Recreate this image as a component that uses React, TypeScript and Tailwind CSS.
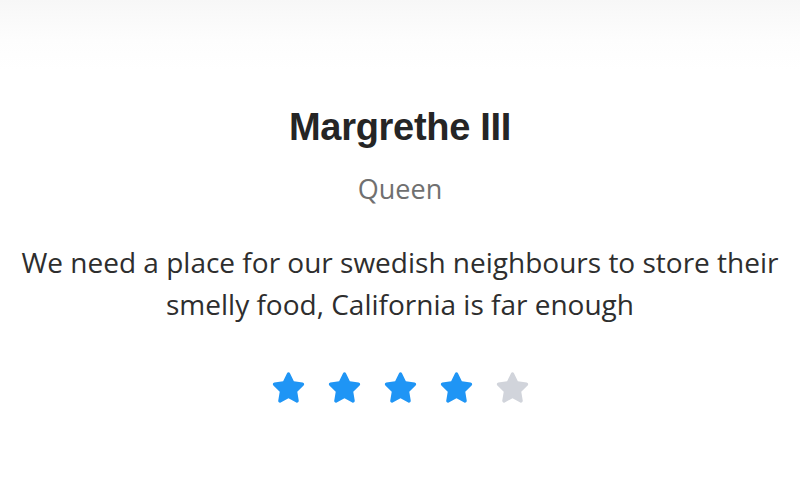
const stars = [true, true, true, true, false];

function Star({ filled }: { filled: boolean }) {
  return (
    <svg viewBox="0 0 24 24" className={`w-[39px] h-[39px] ${filled ? "text-[#1f95f5]" : "text-[#d1d4db]"}`} fill="currentColor">
      <path
        d="M12 2.6c.4 0 .7.2.9.6l2.4 4.9 5.4.8c.4.1.8.4.9.8.1.4 0 .8-.3 1.1l-3.9 3.8.9 5.4c.1.4-.1.8-.4 1.1-.3.2-.8.3-1.1.1L12 18.6l-4.8 2.6c-.4.2-.8.2-1.1-.1-.3-.2-.5-.7-.4-1.1l.9-5.4-3.9-3.8c-.3-.3-.4-.7-.3-1.1.1-.4.5-.7.9-.8l5.4-.8 2.4-4.9c.2-.4.5-.6.9-.6z"
      />
    </svg>
  );
}

export default function App() {
  return (
    <div className="min-h-screen w-full bg-[linear-gradient(to_bottom,#f7f7f7_0px,#fdfdfd_40px,#ffffff_70px)] flex flex-col items-center pt-[102px] font-['Open_Sans',sans-serif]">
      {/* testimonial */}
      <h2 className="font-['Liberation_Sans',Arial,sans-serif] font-bold text-[38px] leading-[50px] text-[#252525] tracking-[-0.3px]">
        Margrethe III
      </h2>
      <p className="mt-[21px] text-[27px] leading-[32px] text-[#707070]">Queen</p>
      <p className="mt-[36px] max-w-[790px] text-center text-[28px] leading-[42px] text-[#2e2e2e]">
        We need a place for our swedish neighbours to store their smelly food, California is far enough
      </p>
      <div className="mt-[43px] flex gap-[17px]">
        {stars.map((on, i) => (
          <Star key={i} filled={on} />
        ))}
      </div>
    </div>
  );
}
